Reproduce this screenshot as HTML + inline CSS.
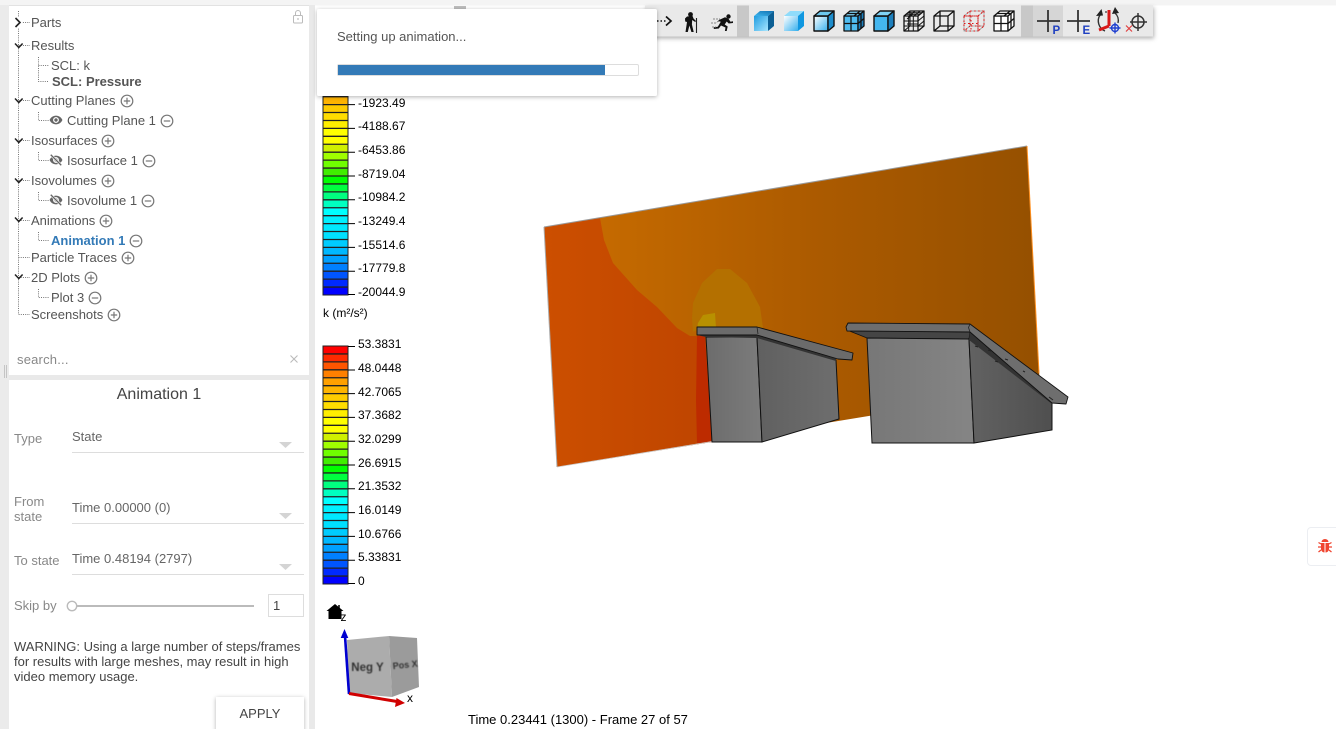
<!DOCTYPE html>
<html>
<head>
<meta charset="utf-8">
<title>Animation</title>
<style>
html,body{margin:0;padding:0;width:1336px;height:729px;overflow:hidden;background:#fff}
svg{display:block;position:absolute;left:0;top:0}
text{font-family:"Liberation Sans",Arial,sans-serif}
.t{font-size:13px;fill:#555}
.l{font-size:12px;fill:#000}
.f{font-size:13px;fill:#888}
.v{font-size:13px;fill:#666}
.d{fill:none;stroke:#777;stroke-width:1;stroke-dasharray:1 1.2}
</style>
</head>
<body>
<svg width="1336" height="729" viewBox="0 0 1336 729" xmlns="http://www.w3.org/2000/svg">
<defs>
<filter id="sh" x="-10%" y="-20%" width="120%" height="150%"><feDropShadow dx="0" dy="1" stdDeviation="2" flood-color="#000" flood-opacity=".3"/></filter>
<filter id="sh2" x="-5%" y="-20%" width="110%" height="150%"><feDropShadow dx="1" dy="2" stdDeviation="2" flood-color="#000" flood-opacity=".3"/></filter>
<filter id="bl" x="-10%" y="-10%" width="120%" height="120%"><feGaussianBlur stdDeviation=".45"/></filter>
<linearGradient id="pl" x1="544" x2="1040" y1="0" y2="0" gradientUnits="userSpaceOnUse"><stop offset="0" stop-color="#cc4f00"/><stop offset=".32" stop-color="#bf4500"/></linearGradient>
<linearGradient id="pm" x1="600" x2="1040" y1="0" y2="0" gradientUnits="userSpaceOnUse"><stop offset="0" stop-color="#c56a00"/><stop offset=".5" stop-color="#ab5a00"/><stop offset="1" stop-color="#955000"/></linearGradient>
<linearGradient id="g1" x1="706" x2="762" y1="0" y2="0" gradientUnits="userSpaceOnUse"><stop offset="0" stop-color="#6c6c6c"/><stop offset="1" stop-color="#7c7c7c"/></linearGradient>
<linearGradient id="g2" x1="757" x2="839" y1="0" y2="0" gradientUnits="userSpaceOnUse"><stop offset="0" stop-color="#606060"/><stop offset="1" stop-color="#6e6e6e"/></linearGradient>
<linearGradient id="g3" x1="867" x2="974" y1="0" y2="0" gradientUnits="userSpaceOnUse"><stop offset="0" stop-color="#777"/><stop offset="1" stop-color="#858585"/></linearGradient>
<linearGradient id="g4" x1="969" x2="1052" y1="0" y2="0" gradientUnits="userSpaceOnUse"><stop offset="0" stop-color="#626262"/><stop offset="1" stop-color="#4f4f4f"/></linearGradient>
<linearGradient id="cb" x1="0" x2="1" y1="0" y2="1"><stop offset="0" stop-color="#1f9ce0"/><stop offset="1" stop-color="#a8e6ff"/></linearGradient>
<linearGradient id="cw" x1="0" x2="1" y1="0" y2="1"><stop offset="0" stop-color="#fff"/><stop offset="1" stop-color="#35b0ee"/></linearGradient>
<linearGradient id="ct" x1="0" x2="1" y1="1" y2="0"><stop offset="0" stop-color="#3fb6ee"/><stop offset="1" stop-color="#1070b0"/></linearGradient>
<symbol id="plus" viewBox="0 0 14 14" overflow="visible"><circle cx="7" cy="7" r="5.8" fill="none" stroke="#777" stroke-width="1.2"/><path d="M3.8 7h6.4M7 3.8v6.4" stroke="#777" stroke-width="1.2"/></symbol>
<symbol id="minus" viewBox="0 0 14 14" overflow="visible"><circle cx="7" cy="7" r="5.8" fill="none" stroke="#777" stroke-width="1.2"/><path d="M3.8 7h6.4" stroke="#777" stroke-width="1.2"/></symbol>
<symbol id="eye" viewBox="0 0 24 24"><path fill="#666" d="M12 4.5C7 4.5 2.73 7.61 1 12c1.73 4.39 6 7.5 11 7.5s9.27-3.11 11-7.5c-1.73-4.39-6-7.5-11-7.5zM12 17c-2.76 0-5-2.24-5-5s2.24-5 5-5 5 2.24 5 5-2.24 5-5 5zm0-8c-1.66 0-3 1.34-3 3s1.34 3 3 3 3-1.34 3-3-1.34-3-3-3z"/></symbol>
<symbol id="eyeoff" viewBox="0 0 24 24"><path fill="#666" d="M12 4.5C7 4.5 2.73 7.61 1 12c1.73 4.39 6 7.5 11 7.5s9.27-3.11 11-7.5c-1.73-4.39-6-7.5-11-7.5zM12 17c-2.76 0-5-2.24-5-5s2.24-5 5-5 5 2.24 5 5-2.24 5-5 5zm0-8c-1.66 0-3 1.34-3 3s1.34 3 3 3 3-1.34 3-3-1.34-3-3-3z"/><path d="M3 3l18 18" stroke="#fff" stroke-width="4.5"/><path d="M3 3l18 18" stroke="#666" stroke-width="2.2"/></symbol>
<symbol id="cv" viewBox="0 0 10 8" overflow="visible"><path d="M1 1.5l3.8 4 3.8-4" fill="none" stroke="#222" stroke-width="1.5"/></symbol>
<g id="bar">
<rect x="0" y="0" width="25" height="8" fill="#ff0000"/><rect x="0" y="7.93" width="25" height="8" fill="#ff2a00"/><rect x="0" y="15.87" width="25" height="8" fill="#ff5500"/><rect x="0" y="23.8" width="25" height="8" fill="#ff8000"/><rect x="0" y="31.73" width="25" height="8" fill="#ffa000"/><rect x="0" y="39.67" width="25" height="8" fill="#ffb400"/><rect x="0" y="47.6" width="25" height="8" fill="#ffcc00"/><rect x="0" y="55.53" width="25" height="8" fill="#ffdd00"/><rect x="0" y="63.47" width="25" height="8" fill="#ffee00"/><rect x="0" y="71.4" width="25" height="8" fill="#ffff00"/>
<rect x="0" y="79.33" width="25" height="8" fill="#ffff00"/><rect x="0" y="87.27" width="25" height="8" fill="#d0f000"/><rect x="0" y="95.2" width="25" height="8" fill="#a0ff00"/><rect x="0" y="103.13" width="25" height="8" fill="#70ff00"/><rect x="0" y="111.07" width="25" height="8" fill="#40ee00"/><rect x="0" y="119" width="25" height="8" fill="#00ff00"/><rect x="0" y="126.93" width="25" height="8" fill="#00ff40"/><rect x="0" y="134.87" width="25" height="8" fill="#00ff80"/><rect x="0" y="142.8" width="25" height="8" fill="#00ffc0"/><rect x="0" y="150.73" width="25" height="8" fill="#00ffff"/>
<rect x="0" y="158.67" width="25" height="8" fill="#00f0ff"/><rect x="0" y="166.6" width="25" height="8" fill="#00e8ff"/><rect x="0" y="174.53" width="25" height="8" fill="#00e0ff"/><rect x="0" y="182.47" width="25" height="8" fill="#00ccff"/><rect x="0" y="190.4" width="25" height="8" fill="#00b8ff"/><rect x="0" y="198.33" width="25" height="8" fill="#00a0ff"/><rect x="0" y="206.27" width="25" height="8" fill="#0080ff"/><rect x="0" y="214.2" width="25" height="8" fill="#0055ff"/><rect x="0" y="222.13" width="25" height="8" fill="#002aff"/><rect x="0" y="230.07" width="25" height="8" fill="#0000ff"/>
<path stroke="#222" stroke-width="1.3" fill="none" d="M0 7.93h25M0 15.87h25M0 23.8h25M0 31.73h25M0 39.67h25M0 47.6h25M0 55.53h25M0 63.47h25M0 71.4h25M0 79.33h25M0 87.27h25M0 95.2h25M0 103.13h25M0 111.07h25M0 119h25M0 126.93h25M0 134.87h25M0 142.8h25M0 150.73h25M0 158.67h25M0 166.6h25M0 174.53h25M0 182.47h25M0 190.4h25M0 198.33h25M0 206.27h25M0 214.2h25M0 222.13h25M0 230.07h25"/>
<rect x="0" y="0" width="25" height="238" fill="none" stroke="#222"/>
<path stroke="#000" fill="none" d="M25 0.5h7M25 24h7M25 47.6h7M25 71.4h7M25 95.2h7M25 119h7M25 142.8h7M25 166.6h7M25 190.4h7M25 214.2h7M25 237.5h7"/>
</g>
</defs>

<!-- chrome -->
<rect x="0" y="0" width="1336" height="5.5" fill="#f4f4f4"/>
<rect x="0" y="5" width="9" height="724" fill="#ebebeb"/>
<rect x="309" y="5" width="6" height="724" fill="#e9e9e9"/>
<rect x="9" y="375" width="300" height="5" fill="#e9e9e9"/>
<rect x="9" y="5" width="300" height="1" fill="#e2e2e2"/>
<path d="M4.5 365v13M6.5 365v13" stroke="#c4c4c4" stroke-width="1"/>

<!-- tree lines -->
<path class="d" d="M18.5 11V314.5H30M18.5 22.5H30M18.5 45.5H30M18.5 100.5H30M18.5 140.5H30M18.5 180.5H30M18.5 220.5H30M18.5 257.5H30M18.5 277.5H30"/>
<path class="d" d="M38.5 57V81.5H49M38.5 65.5H49M38.5 112V120.5H49M38.5 152V160.5H49M38.5 192V200.5H49M38.5 232V240.5H49M38.5 289V297.5H49"/>
<rect x="13" y="17" width="9" height="11" fill="#fff"/>
<path d="M15.5 18l4.5 4.5-4.5 4.5" fill="none" stroke="#222" stroke-width="1.6"/>
<use href="#cv" x="14" y="42" width="10" height="8"/>
<use href="#cv" x="14" y="97" width="10" height="8"/>
<use href="#cv" x="14" y="137" width="10" height="8"/>
<use href="#cv" x="14" y="177" width="10" height="8"/>
<use href="#cv" x="14" y="216" width="10" height="8"/>
<use href="#cv" x="14" y="273" width="10" height="8"/>

<!-- tree text -->
<text class="t" x="31" y="27">Parts</text>
<text class="t" x="31" y="50">Results</text>
<text class="t" x="51" y="70">SCL: k</text>
<text class="t" x="52" y="86" font-weight="700">SCL: Pressure</text>
<text class="t" x="31" y="105">Cutting Planes</text>
<text class="t" x="67" y="125">Cutting Plane 1</text>
<text class="t" x="31" y="145">Isosurfaces</text>
<text class="t" x="67" y="165">Isosurface 1</text>
<text class="t" x="31" y="185">Isovolumes</text>
<text class="t" x="67" y="205">Isovolume 1</text>
<text class="t" x="31" y="225">Animations</text>
<text class="t" x="51" y="245" font-weight="700" style="fill:#337ab7">Animation 1</text>
<text class="t" x="31" y="262">Particle Traces</text>
<text class="t" x="31" y="282">2D Plots</text>
<text class="t" x="51" y="302">Plot 3</text>
<text class="t" x="31" y="319">Screenshots</text>

<use href="#eye" x="49" y="113" width="14" height="14"/>
<use href="#eyeoff" x="49" y="153" width="14" height="14"/>
<use href="#eyeoff" x="49" y="193" width="14" height="14"/>

<use href="#plus" x="120" y="94" width="14" height="14"/>
<use href="#minus" x="160" y="114" width="14" height="14"/>
<use href="#plus" x="101" y="134" width="14" height="14"/>
<use href="#minus" x="142" y="154" width="14" height="14"/>
<use href="#plus" x="101" y="174" width="14" height="14"/>
<use href="#minus" x="141" y="194" width="14" height="14"/>
<use href="#plus" x="99" y="214" width="14" height="14"/>
<use href="#minus" x="129" y="234" width="14" height="14"/>
<use href="#plus" x="121" y="251" width="14" height="14"/>
<use href="#plus" x="84" y="271" width="14" height="14"/>
<use href="#minus" x="88" y="291" width="14" height="14"/>
<use href="#plus" x="107" y="308" width="14" height="14"/>

<!-- lock -->
<rect x="293.500" y="15.500" width="9" height="7.500" rx="1" fill="none" stroke="#bbb"/>
<path d="M295.500 15.500v-2.500a2.500 2.500 0 0 1 5 0v2.500" fill="none" stroke="#bbb"/>
<circle cx="298" cy="19" r=".9" fill="#bbb"/>

<!-- search -->
<text x="17" y="364" font-size="13" fill="#888" letter-spacing=".2">search...</text>
<path d="M290.500 355.500l7 7M297.500 355.500l-7 7" stroke="#bbb" stroke-width="1.100"/>

<!-- animation form -->
<text x="159" y="399" text-anchor="middle" font-size="16" fill="#444">Animation 1</text>
<text class="f" x="14" y="443">Type</text>
<text class="v" x="72" y="441">State</text>
<path d="M72 452.500H304M72 523.500H304M72 574.500H304" stroke="#ddd"/>
<path d="M279 442h13l-6.500 6z" fill="#d4d4d4"/>
<path d="M279 513h13l-6.500 6z" fill="#d4d4d4"/>
<path d="M279 564h13l-6.500 6z" fill="#d4d4d4"/>
<text class="f" x="14" y="506">From</text>
<text class="f" x="14" y="521">state</text>
<text class="v" x="72" y="512">Time 0.00000 (0)</text>
<text class="f" x="14" y="565">To state</text>
<text class="v" x="72" y="563">Time 0.48194 (2797)</text>
<text class="f" x="14" y="610">Skip by</text>
<rect x="77" y="605" width="177" height="2" fill="#bbb"/>
<circle cx="72" cy="606" r="4.700" fill="#fff" stroke="#bbb" stroke-width="1.400"/>
<rect x="268.500" y="594.500" width="35" height="22" fill="#fff" stroke="#ddd"/>
<text x="273" y="610" font-size="13" fill="#444">1</text>
<text x="14" y="651" font-size="13" fill="#444">WARNING: Using a large number of steps/frames</text>
<text x="14" y="666" font-size="13" fill="#444">for results with large meshes, may result in high</text>
<text x="14" y="681" font-size="13" fill="#444">video memory usage.</text>
<rect x="216" y="697" width="88" height="40" fill="#fff" filter="url(#sh)"/>
<text x="260" y="718" text-anchor="middle" font-size="13" fill="#444">APPLY</text>

<!-- toolbar -->
<rect x="645" y="5.500" width="508" height="31" fill="#e9e9e9" filter="url(#sh2)"/>
<rect x="454" y="6" width="12" height="3.500" fill="#bdbdbd"/>
<rect x="737" y="5.500" width="12" height="31" fill="#c8c8c8"/>
<rect x="1021" y="5.500" width="12" height="31" fill="#c8c8c8"/>
<rect x="1033" y="5.500" width="30" height="31" fill="#d6d6d6"/>

<!-- dotted arrow -->
<path d="M657 21h9" stroke="#111" stroke-width="1.600" stroke-dasharray="1.500 2"/>
<path d="M666 16.500l5 4.500-5 4.500" fill="none" stroke="#111" stroke-width="1.700"/>
<!-- hiker -->
<circle cx="690.500" cy="14.500" r="2.400" fill="#111"/>
<path d="M685 18.500l2-2 5.500-.5 1 2.500 2.500 2.500-.8 1-3-2-.3 4.500 1.800 7.500h-2.300l-2-6.500-1.600 6.500h-2.300l1.500-10-1.800-.5z" fill="#111"/>
<path d="M696.500 18v15" stroke="#222" stroke-width="1.100"/>
<!-- runner -->
<circle cx="728.500" cy="16.500" r="2.200" fill="#111"/>
<path d="M719 20l6-2.800 3.500 1.500 2 3 2.500-.5v1.800l-4.300.5-2-2-2 3 3 2-1 4.500h-1.800l.6-3.500-4.500-2-2.200 3-5 .5v-1.800l4-.5 3-5-2-.5-2.500 1.500z" fill="#111"/>
<path d="M713 19h7M711 23h6M712 27h4" stroke="#888" stroke-width="1" stroke-dasharray="2 1"/>

<!-- cubes -->
<g transform="translate(754 11)"><path d="M0 5h14v15H0z" fill="url(#cb)"/><path d="M0 5L6 0h14l-6 5z" fill="url(#ct)"/><path d="M14 5l6-5v15l-6 5z" fill="#0c5f94"/></g>
<g transform="translate(784 11)"><path d="M0 5h14v15H0z" fill="url(#cw)"/><path d="M0 5L6 0h14l-6 5z" fill="#8fdcfb"/><path d="M14 5l6-5v15l-6 5z" fill="#0f97e0"/></g>
<g transform="translate(814 11)" stroke="#111" stroke-width="1.400" stroke-linejoin="round"><path d="M0 5h14v15H0z" fill="url(#cw)"/><path d="M0 5L6 0h14l-6 5z" fill="#6cc8ee"/><path d="M14 5l6-5v15l-6 5z" fill="#1d8ccb"/></g>
<g transform="translate(844 11)" stroke="#111" stroke-width="1.300" stroke-linejoin="round"><path d="M0 5h14v15H0z" fill="#4fbcf0"/><path d="M0 5L6 0h14l-6 5z" fill="#7fd2f4"/><path d="M14 5l6-5v15l-6 5z" fill="#1d7fbc"/><path d="M7 5v15M0 12.500h14M3 2.500h14M10 5l6-5M14 12.500l6-5M17 2.500v15" fill="none"/></g>
<g transform="translate(874 11)" stroke="#111" stroke-width="1.400" stroke-linejoin="round"><path d="M0 5h14v15H0z" fill="#44b6ee"/><path d="M0 5L6 0h14l-6 5z" fill="#7fd2f4"/><path d="M14 5l6-5v15l-6 5z" fill="#1d7fbc"/></g>
<g transform="translate(904 11)" stroke="#111" stroke-width="1" fill="none" stroke-linejoin="round"><path d="M0 5h14v15H0zM0 5L6 0h14l-6 5zM14 5l6-5v15l-6 5z" stroke-width="1.300"/><path d="M4.700 5v15M9.300 5v15M0 10h14M0 15h14M6 0v15M6 15l-6 5M6 15h14M2 3.300h14M4 1.700h14M10 5l6-5M5 5l6-5M14 10l6-5M14 15l6-5M3 8l6-5M3 13h11"/></g>
<g transform="translate(934 11)" stroke="#111" stroke-width="1.300" fill="none" stroke-linejoin="round"><path d="M0 5h14v15H0zM0 5L6 0h14l-6 5zM14 5l6-5v15l-6 5zM6 0v15h14M6 15l-6 5"/></g>
<g transform="translate(964 11)" fill="none"><path d="M0 5h14v15H0zM0 5L6 0h14l-6 5zM14 5l6-5v15l-6 5zM6 0v15h14M6 15l-6 5" stroke="#999" stroke-width=".8"/><path d="M0 5h14v15H0zM0 5L6 0h14l-6 5zM14 5l6-5v15l-6 5zM6 0v15h14M6 15l-6 5M7 5v15M0 12.500h14" stroke="#e01818" stroke-width="1.100" stroke-dasharray="1.500 2.500"/></g>
<g transform="translate(994 11)" stroke="#111" stroke-width="1.300" stroke-linejoin="round"><path d="M0 5h14v15H0z" fill="#fff"/><path d="M0 5L6 0h14l-6 5z" fill="#fff"/><path d="M14 5l6-5v15l-6 5z" fill="#fff"/><path d="M7 5v15M0 12.500h14M3 2.500h14M10 5l6-5M14 12.500l6-5M17 2.500v15" fill="none"/></g>

<!-- P / E -->
<path d="M1037 21h23M1048 10v22" stroke="#333" stroke-width="1.800"/>
<text x="1052.500" y="34" font-size="11.500" font-weight="700" fill="#2040c0">P</text>
<path d="M1067 21h23M1078 10v22" stroke="#333" stroke-width="1.800"/>
<text x="1082.500" y="34" font-size="11.500" font-weight="700" fill="#2040c0">E</text>

<!-- reset icon -->
<path d="M1100 15a11 11 0 0 0 5 16M1115 13a10 10 0 0 1 3 10" fill="none" stroke="#333" stroke-width="1.400"/>
<path d="M1096 16l5.500-7 1.500 6.500zM1112 14l3-7 4 6z" fill="#222"/>
<path d="M1109 10v16M1109 26l-10 4" fill="none" stroke="#d81818" stroke-width="3"/>
<path d="M1105 12h2" stroke="#333" stroke-width="1.200"/>
<circle cx="1115" cy="28" r="3.500" fill="none" stroke="#2040d0" stroke-width="1.400"/>
<path d="M1109.500 28h11M1115 22.500v11" stroke="#2040d0" stroke-width="1.400"/>

<!-- focus icon -->
<circle cx="1138" cy="22" r="6" fill="none" stroke="#333" stroke-width="1.500"/>
<path d="M1130 22h17M1138 13v18" stroke="#333" stroke-width="1.500"/>
<path d="M1126 25.500l6 6M1132 25.500l-6 6" stroke="#e04040" stroke-width="1.200"/>

<!-- legends -->
<use href="#bar" x="323" y="57"/>
<text class="l" x="358" y="107">-1923.49</text>
<text class="l" x="358" y="130">-4188.67</text>
<text class="l" x="358" y="154">-6453.86</text>
<text class="l" x="358" y="178">-8719.04</text>
<text class="l" x="358" y="201">-10984.2</text>
<text class="l" x="358" y="225">-13249.4</text>
<text class="l" x="358" y="249">-15514.6</text>
<text class="l" x="358" y="272">-17779.8</text>
<text class="l" x="358" y="296">-20044.9</text>
<text class="l" x="323" y="317">k (m²/s²)</text>
<use href="#bar" x="323" y="346"/>
<text class="l" x="358" y="348">53.3831</text>
<text class="l" x="358" y="372">48.0448</text>
<text class="l" x="358" y="396">42.7065</text>
<text class="l" x="358" y="419">37.3682</text>
<text class="l" x="358" y="443">32.0299</text>
<text class="l" x="358" y="467">26.6915</text>
<text class="l" x="358" y="490">21.3532</text>
<text class="l" x="358" y="514">16.0149</text>
<text class="l" x="358" y="538">10.6766</text>
<text class="l" x="358" y="561">5.33831</text>
<text class="l" x="358" y="585">0</text>

<!-- axis widget -->
<path d="M335 604l8.500 7h-2v8h-13v-8h-2z" fill="#000"/>
<path d="M339 605v3" stroke="#000" stroke-width="1.500"/>
<text x="340.500" y="621" font-size="12" fill="#000">z</text>
<polygon points="347,640 389,636 392,697 349,693" fill="#acacac"/>
<polygon points="389,636 417,638 419,687 392,697" fill="#9b9b9b"/>
<text x="367.500" y="671" text-anchor="middle" font-size="11.500" font-weight="700" fill="#333" filter="url(#bl)">Neg Y</text>
<text x="405.500" y="668" text-anchor="middle" font-size="9" font-weight="700" fill="#333" filter="url(#bl)" transform="rotate(-6 405 668)">Pos X</text>
<path d="M349 694L345 636" stroke="#0000d0" stroke-width="2.600"/>
<path d="M344.500 629l3.800 9h-7.600z" fill="#0000d0"/>
<path d="M349 693.500L397 701.500" stroke="#d00000" stroke-width="3"/>
<path d="M405 703l-10 4 1.500-9z" fill="#d00000"/>
<text x="407" y="702" font-size="12" fill="#000">x</text>

<text x="468" y="724" font-size="13" fill="#000">Time 0.23441 (1300) - Frame 27 of 57</text>

<!-- 3D plane -->
<polygon points="544,227 1027,146 1040,388 557,467" fill="url(#pm)"/>
<polygon points="544,227 600,218 604,240 613,263 637,290 657,307 677,328 690,336 700,336 712,442 557,467" fill="url(#pl)"/>
<polygon points="693,303 702,283 717,269 730,269 747,283 760,307 763,328 697,330 693,332 692,318" fill="#b47000"/>
<polygon points="698,323 703,315 715,313 716,328 697,329" fill="#b89000"/>
<polygon points="697,336 705,335 712,442 697,443 696,400" fill="#bd2b00"/>
<path d="M544 227L1027 146" stroke="#999" stroke-width="1"/>
<path d="M544 227L557 467" stroke="#aaa" stroke-width="1"/>
<path d="M557 467L712 441.500" stroke="#ccc" stroke-width=".8"/>
<path d="M1027 146L1039 373" stroke="#ff9020" stroke-width="1"/>

<!-- box 1 -->
<polygon points="706,337 757,337 762,442 712,442" fill="url(#g1)" stroke="#111" stroke-width="1"/>
<polygon points="757,337 836,360 839,419 762,442" fill="url(#g2)" stroke="#111" stroke-width="1"/>
<polygon points="697,335 757,335 836,358 836,361 757,338 706,337" fill="#333"/>
<polygon points="697,327 757,327 853,353 852,360 838,359 757,335 697,335" fill="#6b6b6b" stroke="#111" stroke-width=".9" stroke-linejoin="round"/>
<path d="M757 327l1 7" stroke="#222" stroke-width=".8"/>

<!-- box 2 -->
<polygon points="847,330 970,332 969,339 867,338" fill="#454545" stroke="#111" stroke-width=".8"/>
<polygon points="867,338 969,339 974,443 872,443" fill="url(#g3)" stroke="#111" stroke-width="1"/>
<polygon points="969,339 1052,402 1052,430 974,443" fill="url(#g4)" stroke="#111" stroke-width="1"/>
<polygon points="970,332 1052,395 1052,404 969,340" fill="#333"/>
<polygon points="848,323 970,324 1068,397 1066,404 1052,403 970,332 847,331 846,327" fill="#6e6e6e" stroke="#111" stroke-width=".9" stroke-linejoin="round"/>
<path d="M970 324l-1.500 3.500 1.500 4.500" fill="none" stroke="#222" stroke-width=".8"/>
<path d="M975 346l3 1M988 350l3 1M995 361l3 1M1005 359l3 1M1023 371l2 1M1049 397l4 3" stroke="#222" stroke-width="1"/>

<!-- dialog -->
<rect x="317" y="9" width="340" height="87" rx="2" fill="#fff" filter="url(#sh)"/>
<text x="337" y="41" font-size="13" fill="#555">Setting up animation...</text>
<rect x="337.500" y="64.500" width="301" height="11" rx="1.500" fill="#fff" stroke="#ddd"/>
<rect x="338" y="65" width="267" height="10" fill="#337ab7"/>

<!-- bug button -->
<path d="M1336 527.500h-25a3.500 3.500 0 0 0 -3.500 3.500v31a3.500 3.500 0 0 0 3.500 3.500h25" fill="#fff" stroke="#eceef2"/>
<path d="M1321.500 542a3.500 3 0 0 1 7 0zM1321 543h3.500v9.500a4 4 0 0 1 -3.500 -3zM1325.500 543h3.500v6.500a4 4 0 0 1 -3.500 3z" fill="#f04530"/>
<path d="M1321 544l-2.500 -1.500M1329 544l2.500 -1.500M1321 547h-3M1329 547h3M1321 550l-2.500 2M1329 550l2.500 2" stroke="#f04530" stroke-width="1.300"/>
</svg>
</body>
</html>
